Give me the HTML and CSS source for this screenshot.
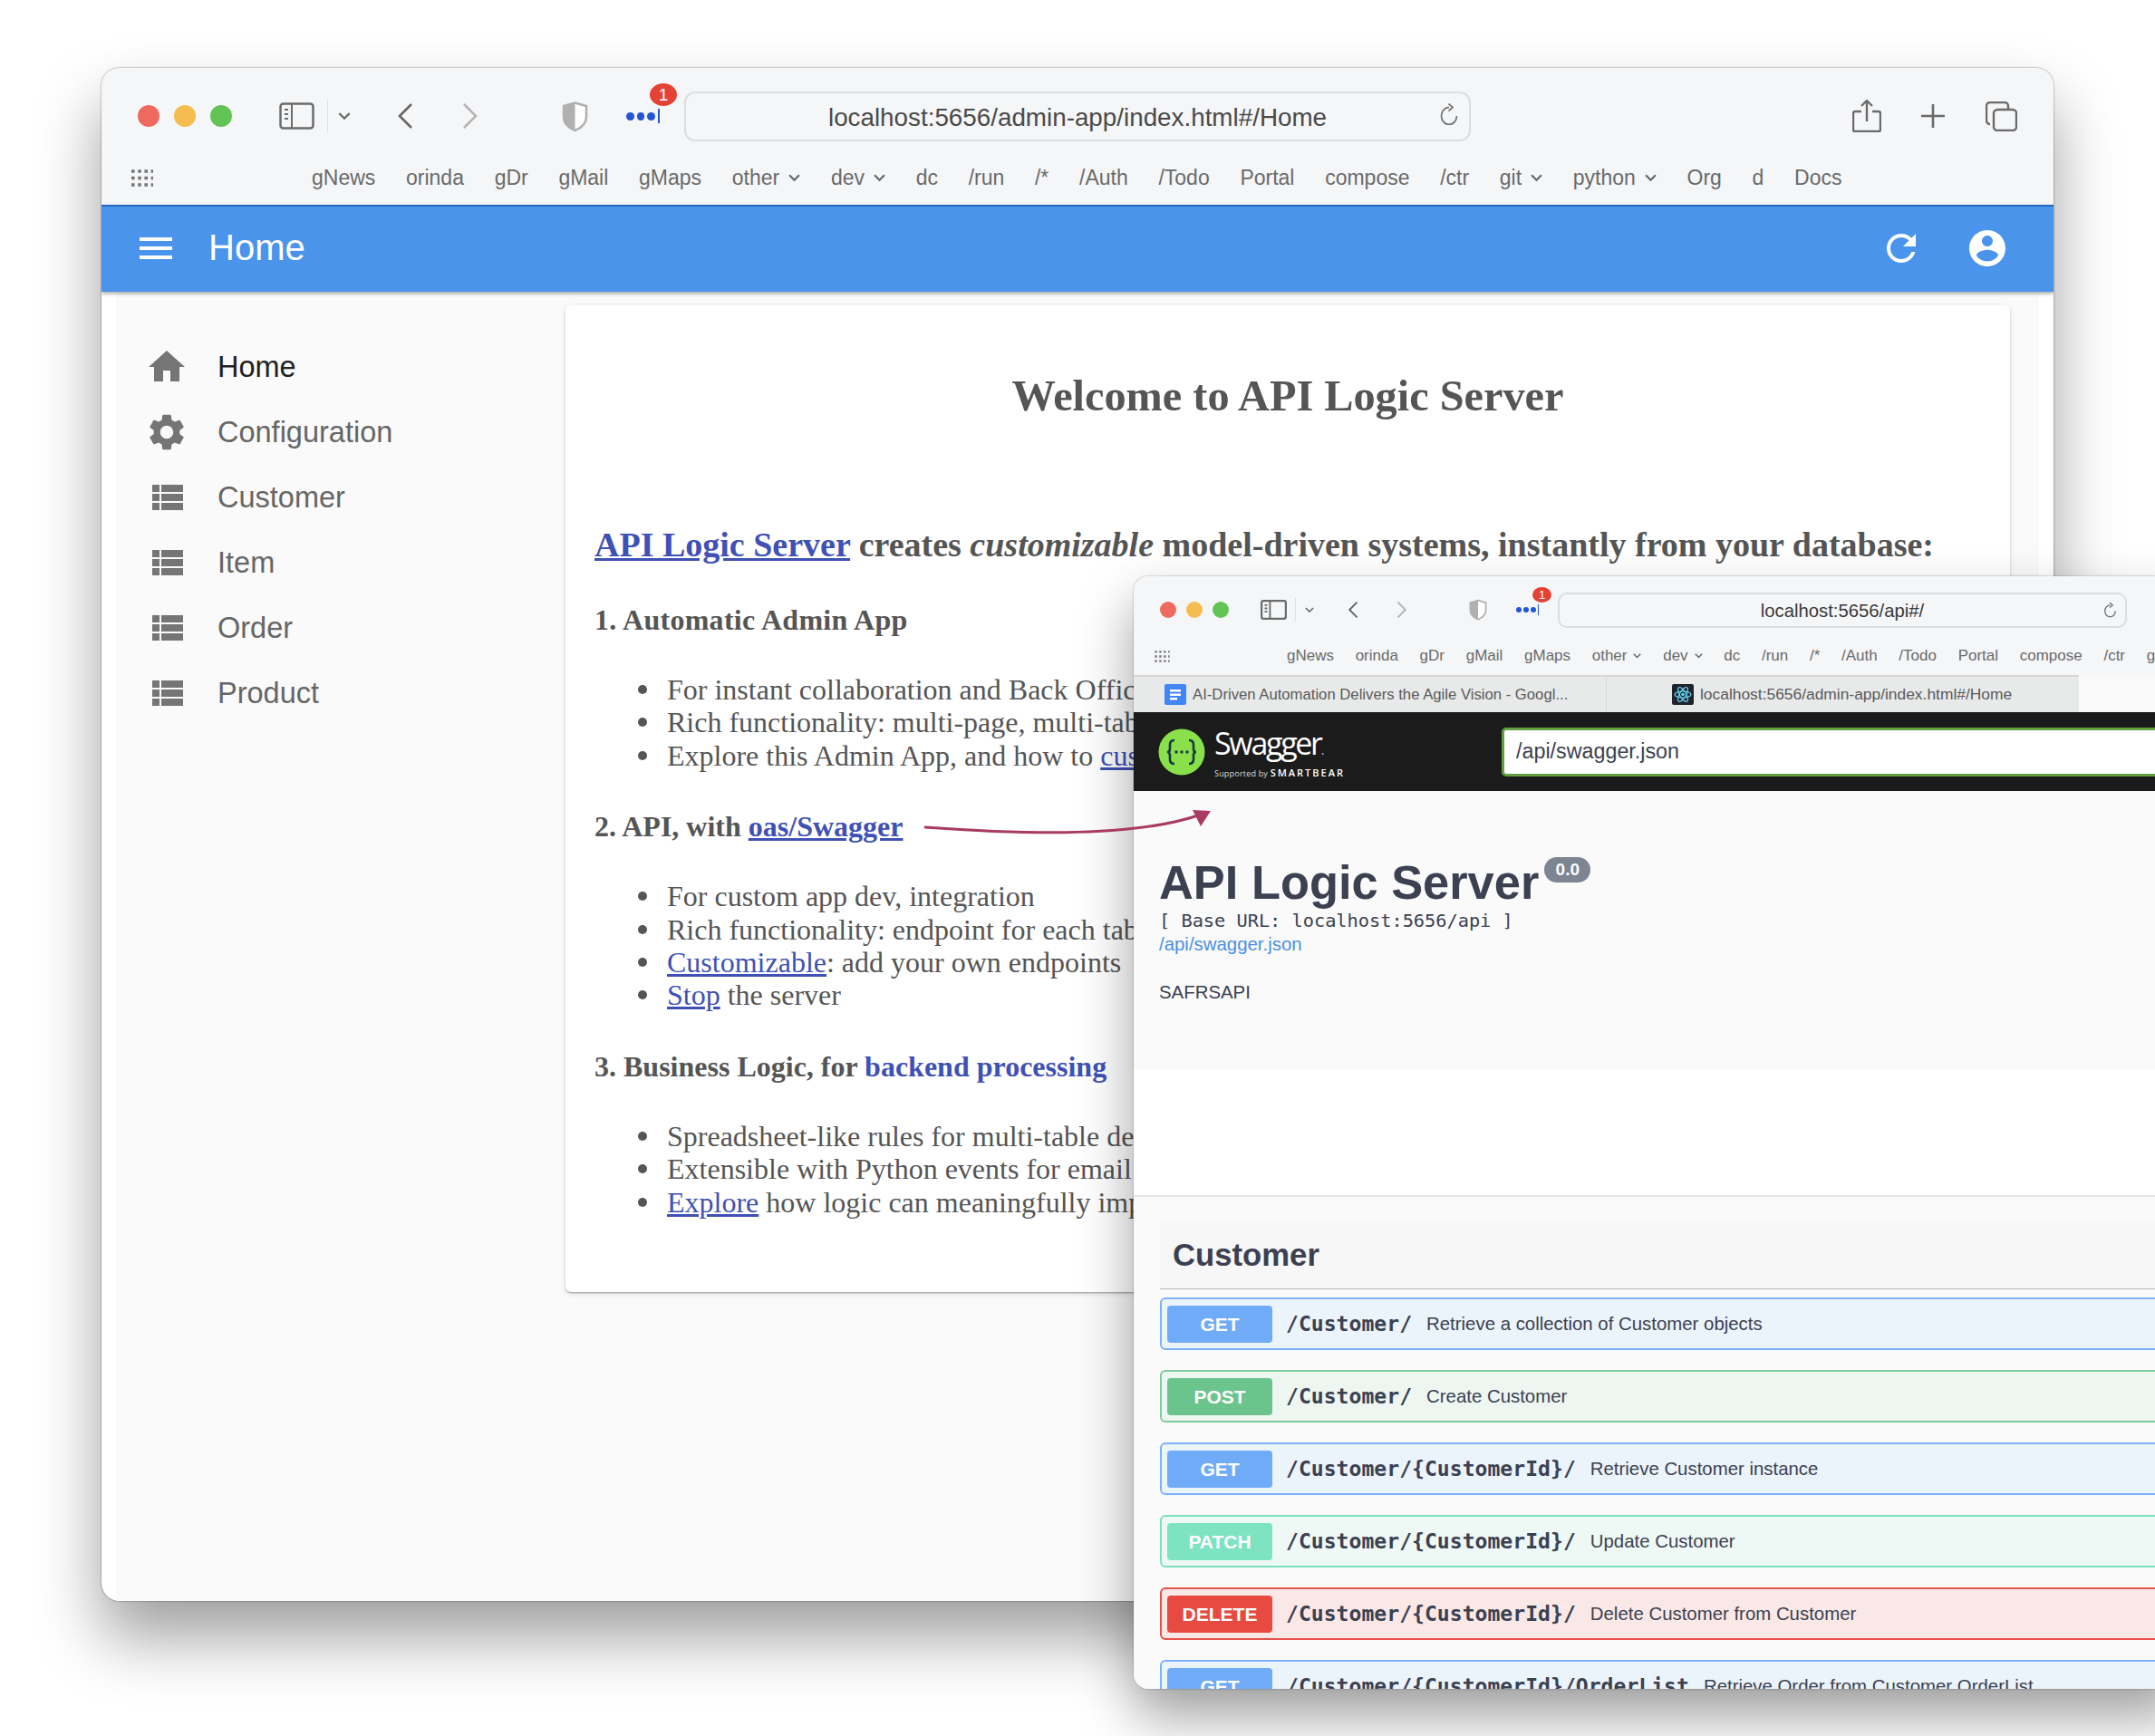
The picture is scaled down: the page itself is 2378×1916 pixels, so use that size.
FILE: index.html

```html
<!DOCTYPE html>
<html lang="en">
<head>
  <meta charset="UTF-8">
  <title>API Logic Server</title>
  <link rel="stylesheet" href="styles.css">
</head>
<body>

<div class="window admin-window">
  <div class="toolbar">
    <div class="top-row">
      <span class="light red"></span><span class="light yellow"></span><span class="light green"></span>
      <svg class="ic-sidebar" viewBox="0 0 39 30"><rect x="1.5" y="1.5" width="36" height="27" rx="3" fill="none" stroke="#6b6b6b" stroke-width="2.5"/><path d="M14 2v26M6 8h4M6 13h4M6 18h4" stroke="#6b6b6b" stroke-width="2"/></svg>
      <span class="tool-divider"></span>
      <svg class="ic-chev" viewBox="0 0 12 8"><path d="M1 1l5 5 5-5" fill="none" stroke="#6b6b6b" stroke-width="2"/></svg>
      <svg class="ic-back" viewBox="0 0 18 28"><path d="M16 1L3 14l13 13" fill="none" stroke="#666" stroke-width="2.6"/></svg>
      <svg class="ic-forward" viewBox="0 0 18 28"><path d="M2 1l13 13L2 27" fill="none" stroke="#b5b5b5" stroke-width="2.6"/></svg>
      <svg class="ic-shield" viewBox="0 0 29 33"><path d="M14.5 1.5L27 5v12c0 7-5 12-12.500 15C7 29 2 24 2 17V5z" fill="#fff" stroke="#b0b0b0" stroke-width="2.500"/><path d="M14.500 1.500L2 5v12c0 7 5 12 12.500 15z" fill="#b0b0b0"/></svg>
      <div class="dots">
        <i></i><i></i><i></i><b></b>
        <span class="dots-badge">1</span>
      </div>
      <div class="urlbar">
        <span>localhost:5656/admin-app/index.html#/Home</span>
        <svg class="ic-reload" viewBox="0 0 22 24"><path d="M11 4.500a8.500 9.500 0 1 0 8.500 9.500" fill="none" stroke="#777" stroke-width="1.800"/><path d="M10.500 0.500l4.500 4-4.500 4" fill="none" stroke="#777" stroke-width="1.800"/></svg>
      </div>
      <svg class="ic-share" viewBox="0 0 32 36"><path d="M10 13H3a2 2 0 0 0-2 2v18a2 2 0 0 0 2 2h26a2 2 0 0 0 2-2V15a2 2 0 0 0-2-2h-7M16 24V2M10 7l6-6 6 6" fill="none" stroke="#6b6b6b" stroke-width="2.400"/></svg>
      <svg class="ic-plus" viewBox="0 0 28 28"><path d="M14 1v26M1 14h26" stroke="#6b6b6b" stroke-width="2.600"/></svg>
      <svg class="ic-tabs" viewBox="0 0 35 33"><rect x="9" y="9" width="25" height="23" rx="4" fill="none" stroke="#6b6b6b" stroke-width="2.400"/><path d="M5 25a4 4 0 0 1-4-4V5a4 4 0 0 1 4-4h16a4 4 0 0 1 4 4v4" fill="none" stroke="#6b6b6b" stroke-width="2.400"/></svg>
    </div>
    <div class="bookmarks">
      <svg class="ic-grid" viewBox="0 0 26 19"><path d="M1 2h24M1 9.500h24M1 17h24" stroke="#777" stroke-width="3.600" stroke-dasharray="3.600 3.600"/></svg>
      <span>gNews</span><span>orinda</span><span>gDr</span><span>gMail</span><span>gMaps</span>
      <span>other<svg class="bm-chev" viewBox="0 0 12 8"><path d="M1 1l5 5 5-5" fill="none" stroke="#666" stroke-width="2"/></svg></span>
      <span>dev<svg class="bm-chev" viewBox="0 0 12 8"><path d="M1 1l5 5 5-5" fill="none" stroke="#666" stroke-width="2"/></svg></span>
      <span>dc</span><span>/run</span><span>/*</span><span>/Auth</span><span>/Todo</span><span>Portal</span><span>compose</span><span>/ctr</span>
      <span>git<svg class="bm-chev" viewBox="0 0 12 8"><path d="M1 1l5 5 5-5" fill="none" stroke="#666" stroke-width="2"/></svg></span>
      <span>python<svg class="bm-chev" viewBox="0 0 12 8"><path d="M1 1l5 5 5-5" fill="none" stroke="#666" stroke-width="2"/></svg></span>
      <span>Org</span><span>d</span><span>Docs</span>
    </div>
  </div>

  <div class="appbar">
    <svg class="appbar-icon" viewBox="0 0 24 24"><path d="M3 18h18v-2H3v2zm0-5h18v-2H3v2zm0-7v2h18V6H3z"/></svg>
    <div class="appbar-title">Home</div>
    <svg class="appbar-icon" viewBox="0 0 24 24"><path d="M17.650 6.350C16.200 4.900 14.210 4 12 4c-4.420 0-7.990 3.580-7.990 8s3.570 8 7.990 8c3.730 0 6.840-2.550 7.730-6h-2.080c-.82 2.330-3.040 4-5.650 4-3.310 0-6-2.690-6-6s2.690-6 6-6c1.660 0 3.140.69 4.220 1.780L13 11h7V4l-2.350 2.350z"/></svg>
    <svg class="appbar-icon" viewBox="0 0 24 24"><path d="M12 2C6.480 2 2 6.480 2 12s4.480 10 10 10 10-4.480 10-10S17.520 2 12 2zm0 3c1.660 0 3 1.340 3 3s-1.340 3-3 3-3-1.340-3-3 1.340-3 3-3zm0 14.200c-2.500 0-4.710-1.280-6-3.220.03-1.990 4-3.080 6-3.080 1.990 0 5.970 1.090 6 3.080-1.290 1.940-3.500 3.220-6 3.220z"/></svg>
  </div>

  <div class="app-body">
    <div class="sidebar">
      <div class="menu-item active">
        <svg viewBox="0 0 24 24"><path d="M10 20v-6h4v6h5v-8h3L12 3 2 12h3v8z"/></svg>Home
      </div>
      <div class="menu-item">
        <svg viewBox="0 0 24 24"><path d="M19.140 12.940c.04-.3.06-.61.06-.94 0-.32-.02-.64-.07-.94l2.030-1.580c.18-.14.23-.41.12-.61l-1.920-3.320c-.12-.22-.37-.29-.59-.22l-2.390.96c-.5-.38-1.030-.7-1.620-.94l-.36-2.540c-.04-.24-.24-.41-.48-.41h-3.840c-.24 0-.43.17-.47.41l-.36 2.540c-.59.24-1.130.57-1.620.94l-2.390-.96c-.22-.08-.47 0-.59.22L2.740 8.870c-.12.21-.08.47.12.61l2.030 1.580c-.05.3-.09.63-.09.94s.02.64.07.94l-2.030 1.580c-.18.14-.23.41-.12.61l1.920 3.320c.12.22.37.29.59.22l2.390-.96c.5.38 1.030.7 1.620.94l.36 2.540c.05.24.24.41.48.41h3.840c.24 0 .44-.17.47-.41l.36-2.540c.59-.24 1.130-.56 1.620-.94l2.390.96c.22.08.47 0 .59-.22l1.920-3.320c.12-.22.07-.47-.12-.61l-2.010-1.580zM12 15.600c-1.980 0-3.600-1.620-3.600-3.600s1.620-3.600 3.600-3.600 3.600 1.620 3.600 3.600-1.620 3.600-3.600 3.600z"/></svg>Configuration
      </div>
      <div class="menu-item">
        <svg viewBox="0 0 24 24"><path d="M4 14h4v-4H4v4zm0 5h4v-4H4v4zM4 9h4V5H4v4zm5 5h12v-4H9v4zm0 5h12v-4H9v4zM9 5v4h12V5H9z"/></svg>Customer
      </div>
      <div class="menu-item">
        <svg viewBox="0 0 24 24"><path d="M4 14h4v-4H4v4zm0 5h4v-4H4v4zM4 9h4V5H4v4zm5 5h12v-4H9v4zm0 5h12v-4H9v4zM9 5v4h12V5H9z"/></svg>Item
      </div>
      <div class="menu-item">
        <svg viewBox="0 0 24 24"><path d="M4 14h4v-4H4v4zm0 5h4v-4H4v4zM4 9h4V5H4v4zm5 5h12v-4H9v4zm0 5h12v-4H9v4zM9 5v4h12V5H9z"/></svg>Order
      </div>
      <div class="menu-item">
        <svg viewBox="0 0 24 24"><path d="M4 14h4v-4H4v4zm0 5h4v-4H4v4zM4 9h4V5H4v4zm5 5h12v-4H9v4zm0 5h12v-4H9v4zM9 5v4h12V5H9z"/></svg>Product
      </div>
    </div>

    <div class="card">
      <h2 class="welcome">Welcome to API Logic Server</h2>
      <p class="lead"><a href="#">API Logic Server</a> creates <i>customizable</i> model-driven systems, instantly from your database:</p>

      <h3 class="first">1. Automatic Admin App</h3>
      <ul>
        <li>For instant collaboration and Back Office</li>
        <li>Rich functionality: multi-page, multi-table</li>
        <li>Explore this Admin App, and how to <a href="#">customize</a></li>
      </ul>

      <h3>2. API, with <a href="#">oas/Swagger</a></h3>
      <ul>
        <li>For custom app dev, integration</li>
        <li>Rich functionality: endpoint for each table</li>
        <li><a href="#">Customizable</a>: add your own endpoints</li>
        <li><a href="#">Stop</a> the server</li>
      </ul>

      <h3>3. Business Logic, for <a class="plain" href="#">backend processing</a></h3>
      <ul>
        <li>Spreadsheet-like rules for multi-table derivations</li>
        <li>Extensible with Python events for email</li>
        <li><a href="#">Explore</a> how logic can meaningfully improve</li>
      </ul>
    </div>
  </div>
</div>

<div class="window swagger-window">
  <div class="toolbar2">
    <div class="top-row2">
      <span class="light2 red"></span><span class="light2 yellow"></span><span class="light2 green"></span>
      <svg class="ic2-sidebar" viewBox="0 0 39 30" preserveAspectRatio="none"><rect x="1.500" y="1.500" width="36" height="27" rx="3" fill="none" stroke="#6b6b6b" stroke-width="3"/><path d="M14 2v26M6 8h4M6 13h4M6 18h4" stroke="#6b6b6b" stroke-width="2.500"/></svg>
      <span class="tool2-divider"></span>
      <svg class="ic2-chev" viewBox="0 0 12 8"><path d="M1 1l5 5 5-5" fill="none" stroke="#6b6b6b" stroke-width="2"/></svg>
      <svg class="ic2-back" viewBox="0 0 18 28"><path d="M16 1L3 14l13 13" fill="none" stroke="#666" stroke-width="3"/></svg>
      <svg class="ic2-forward" viewBox="0 0 18 28"><path d="M2 1l13 13L2 27" fill="none" stroke="#b5b5b5" stroke-width="3"/></svg>
      <svg class="ic2-shield" viewBox="0 0 29 33"><path d="M14.500 1.500L27 5v12c0 7-5 12-12.500 15C7 29 2 24 2 17V5z" fill="#fff" stroke="#b0b0b0" stroke-width="2.500"/><path d="M14.500 1.500L2 5v12c0 7 5 12 12.500 15z" fill="#b0b0b0"/></svg>
      <div class="dots2">
        <i></i><i></i><i></i><b></b>
        <span class="dots2-badge">1</span>
      </div>
      <div class="urlbar2">
        <span>localhost:5656/api#/</span>
        <svg class="ic2-reload" viewBox="0 0 22 24"><path d="M11 4.500a8.500 9.500 0 1 0 8.500 9.500" fill="none" stroke="#777" stroke-width="2"/><path d="M10.500 0.500l4.500 4-4.500 4" fill="none" stroke="#777" stroke-width="2"/></svg>
      </div>
    </div>
    <div class="bookmarks2">
      <svg class="ic2-grid" viewBox="0 0 26 19"><path d="M1 2h24M1 9.500h24M1 17h24" stroke="#777" stroke-width="3.600" stroke-dasharray="3.600 3.600"/></svg>
      <span>gNews</span><span>orinda</span><span>gDr</span><span>gMail</span><span>gMaps</span>
      <span>other<svg class="bm2-chev" viewBox="0 0 12 8"><path d="M1 1l5 5 5-5" fill="none" stroke="#666" stroke-width="2"/></svg></span>
      <span>dev<svg class="bm2-chev" viewBox="0 0 12 8"><path d="M1 1l5 5 5-5" fill="none" stroke="#666" stroke-width="2"/></svg></span>
      <span>dc</span><span>/run</span><span>/*</span><span>/Auth</span><span>/Todo</span><span>Portal</span><span>compose</span><span>/ctr</span><span>git</span>
    </div>
  </div>

  <div class="tabs">
    <div class="tab">
      <svg class="tab-icon" viewBox="0 0 24 23"><rect width="24" height="23" rx="2" fill="#4285f4"/><path d="M6 6h12v2.500H6zM6 10.500h12V13H6zM6 15h8v2.500H6z" fill="#fff"/></svg>
      AI-Driven Automation Delivers the Agile Vision - Googl...
    </div>
    <div class="tab tab-two">
      <svg class="tab-icon" viewBox="0 0 24 23"><rect width="24" height="23" rx="2" fill="#20232a"/><g fill="none" stroke="#61dafb" stroke-width="1.200"><ellipse cx="12" cy="11.500" rx="9" ry="3.500"/><ellipse cx="12" cy="11.500" rx="9" ry="3.500" transform="rotate(60 12 11.500)"/><ellipse cx="12" cy="11.500" rx="9" ry="3.500" transform="rotate(120 12 11.500)"/></g><circle cx="12" cy="11.500" r="1.800" fill="#61dafb"/></svg>
      localhost:5656/admin-app/index.html#/Home
    </div>
  </div>

  <div class="swagger-bar">
    <svg class="swagger-logo" viewBox="0 0 52 52">
      <circle cx="26" cy="26" r="25.500" fill="#89e04b"/>
      <path d="M18 13c-4 0-5 2-5 5v4.500c0 2-1 3.500-3 3.500 2 0 3 1.500 3 3.500V34c0 3 1 5 5 5M34 13c4 0 5 2 5 5v4.500c0 2 1 3.500 3 3.500-2 0-3 1.500-3 3.500V34c0 3-1 5-5 5" fill="none" stroke="#173647" stroke-width="2.600"/>
      <circle cx="20" cy="26" r="1.700" fill="#173647"/><circle cx="26" cy="26" r="1.700" fill="#173647"/><circle cx="32" cy="26" r="1.700" fill="#173647"/>
    </svg>
    <div class="swagger-brand">
      <div class="brand-name">Swagger<small>.</small></div>
      <div class="brand-sub">Supported by <b>SMARTBEAR</b></div>
    </div>
    <div class="swagger-input">/api/swagger.json</div>
  </div>

  <div class="info">
    <div class="info-title">API Logic Server<span class="version">0.0</span></div>
    <div class="base-url">[ Base URL: localhost:5656/api ]</div>
    <a class="spec-link" href="#">/api/swagger.json</a>
    <div class="info-desc">SAFRSAPI</div>
  </div>
  <div class="info-gap"></div>

  <div class="tag-section">
    <div class="tag-header">Customer</div>

    <div class="op op-get">
      <span class="method">GET</span><span class="op-path">/Customer/</span><span class="op-desc">Retrieve a collection of Customer objects</span>
    </div>
    <div class="op op-post">
      <span class="method">POST</span><span class="op-path">/Customer/</span><span class="op-desc">Create Customer</span>
    </div>
    <div class="op op-get">
      <span class="method">GET</span><span class="op-path">/Customer/{CustomerId}/</span><span class="op-desc">Retrieve Customer instance</span>
    </div>
    <div class="op op-patch">
      <span class="method">PATCH</span><span class="op-path">/Customer/{CustomerId}/</span><span class="op-desc">Update Customer</span>
    </div>
    <div class="op op-delete">
      <span class="method">DELETE</span><span class="op-path">/Customer/{CustomerId}/</span><span class="op-desc">Delete Customer from Customer</span>
    </div>
    <div class="op op-get">
      <span class="method">GET</span><span class="op-path">/Customer/{CustomerId}/OrderList</span><span class="op-desc">Retrieve Order from Customer OrderList</span>
    </div>
  </div>
</div>

<svg class="arrow" viewBox="0 0 340 40">
  <path d="M5 28C90 34 230 42 310 14" fill="none" stroke="#a83a63" stroke-width="3"/>
  <path d="M321 10L301 9L310 27z" fill="#a83a63"/>
</svg>

</body>
</html>
```

FILE: styles.css

```css
html, body {
  margin: 0;
  height: 100%;
  overflow: hidden;
  background: #fff;
}
body {
  position: relative;
  font-family: "Liberation Sans", Arial, sans-serif;
}
svg {
  display: block;
  flex: none;
}

.window {
  position: absolute;
  overflow: hidden;
  box-sizing: border-box;
}
.admin-window {
  left: 112px;
  top: 75px;
  width: 2154px;
  height: 1692px;
  background: #fff;
  border-radius: 20px;
  box-shadow: 0 40px 70px rgba(0, 0, 0, 0.38), 0 0 2px rgba(0, 0, 0, 0.6);
  display: flex;
  flex-direction: column;
}
.swagger-window {
  left: 1251px;
  top: 636px;
  width: 1160px;
  height: 1228px;
  background: #fafafa;
  border-radius: 16px;
  box-shadow: 0 30px 60px rgba(0, 0, 0, 0.38), 0 0 2px rgba(0, 0, 0, 0.4);
}

/* safari toolbar, big window */
.toolbar {
  height: 151px;
  background: #f5f6f8;
  flex: none;
}
.top-row {
  height: 106px;
  display: flex;
  align-items: center;
  padding-left: 40px;
}
.light {
  width: 24px;
  height: 24px;
  border-radius: 50%;
  margin-right: 16px;
}
.light.red, .light2.red { background: #ee6a5f; }
.light.yellow, .light2.yellow { background: #f5bd4f; }
.light.green, .light2.green { background: #61c454; }
.ic-sidebar { width: 39px; height: 30px; margin-left: 36px; }
.tool-divider {
  width: 1px;
  height: 36px;
  background: #e0e0e0;
  margin-left: 14px;
}
.ic-chev { width: 14px; height: 9px; margin-left: 11px; }
.ic-back { width: 18px; height: 28px; margin-left: 51px; }
.ic-forward { width: 18px; height: 28px; margin-left: 54px; }
.ic-shield { width: 29px; height: 33px; margin-left: 92px; }
.dots {
  position: relative;
  width: 37px;
  margin-left: 42px;
  display: flex;
  align-items: center;
  gap: 3px;
}
.dots i {
  width: 9px;
  height: 9px;
  border-radius: 50%;
  background: #2356d6;
}
.dots b {
  width: 2px;
  height: 16px;
  background: #2356d6;
}
.dots-badge {
  position: absolute;
  left: 26px;
  top: -28px;
  width: 30px;
  height: 25px;
  border-radius: 50%;
  background: #e34234;
  color: #fff;
  font-size: 19px;
  line-height: 25px;
  text-align: center;
}
.urlbar {
  position: relative;
  box-sizing: border-box;
  width: 868px;
  height: 55px;
  margin-left: 27px;
  border: 2px solid #dcdddf;
  border-radius: 12px;
  text-align: center;
  line-height: 53px;
  font-size: 27.800px;
  color: #4a4a4a;
}
.ic-reload {
  position: absolute;
  right: 11px;
  top: 11px;
  width: 22px;
  height: 24px;
}
.ic-share { width: 32px; height: 36px; margin-left: 421px; }
.ic-plus { width: 28px; height: 28px; margin-left: 43px; }
.ic-tabs { width: 35px; height: 33px; margin-left: 44px; }

.bookmarks {
  height: 30px;
  display: flex;
  align-items: center;
  gap: 33.700px;
  padding-left: 32px;
  font-size: 23px;
  color: #6a6a6a;
  white-space: nowrap;
}
.bookmarks span {
  display: flex;
  align-items: center;
}
.ic-grid { width: 26px; height: 19px; margin-right: 174px; }
.ic-grid + span { margin-left: -33.700px; }
.bm-chev { width: 13px; height: 9px; margin-left: 10px; }

/* blue app bar */
.appbar {
  height: 96px;
  box-sizing: border-box;
  flex: none;
  background: #4a94ec;
  border-top: 2px solid #2468c0;
  box-shadow: 0 2px 4px rgba(0, 0, 0, 0.35);
  display: flex;
  align-items: center;
  padding: 0 49px 2px 36px;
  gap: 47px;
  position: relative;
  z-index: 1;
}
.appbar-icon {
  width: 48px;
  height: 48px;
  fill: #fff;
}
.appbar-title {
  color: #fff;
  font-size: 40px;
  margin-left: -13px;
  padding-bottom: 2px;
  flex: 1;
}

.app-body {
  flex: 1;
  display: flex;
  align-items: flex-start;
  margin: 0 16px;
  background: #fafafa;
}
.sidebar {
  width: 496px;
  padding: 47px 0 0 32px;
  box-sizing: border-box;
  flex: none;
}
.menu-item {
  height: 72px;
  display: flex;
  align-items: center;
  font-size: 32.500px;
  color: #666;
}
.menu-item.active { color: #212121; }
.menu-item svg {
  width: 48px;
  height: 48px;
  margin-right: 32px;
  fill: #757575;
}

.card {
  width: 1594px;
  height: 1089px;
  margin-top: 15px;
  box-sizing: border-box;
  padding: 72px 32px 0;
  background: #fff;
  border-radius: 6px;
  box-shadow: 0 2px 2px -1px rgba(0, 0, 0, 0.2), 0 1px 2px rgba(0, 0, 0, 0.14), 0 2px 6px rgba(0, 0, 0, 0.12);
  font-family: "Liberation Serif", "Times New Roman", serif;
  color: #555;
  white-space: nowrap;
}
.card a { color: #3f51b5; }
.card a.plain { text-decoration: none; }
.welcome {
  margin: 0;
  font-size: 48.300px;
  line-height: 56px;
  text-align: center;
}
.lead {
  margin: 114px 0 0;
  font-size: 38px;
  line-height: 44px;
  font-weight: bold;
}
.card h3 {
  margin: 41px 0 0;
  font-size: 32px;
  line-height: 38px;
}
.card h3.first {
  margin-top: 42px;
  letter-spacing: 0.270px;
}
.card ul {
  margin: 40px 0 0;
  padding-left: 80px;
  font-size: 32px;
  line-height: 36.400px;
  list-style: none;
}
.card li { position: relative; }
.card li::before {
  content: "";
  position: absolute;
  left: -32px;
  top: 13px;
  width: 10px;
  height: 10px;
  border-radius: 50%;
  background: #555;
}

/* small window */
.toolbar2 {
  height: 109px;
  background: #f5f6f8;
}
.top-row2 {
  height: 74px;
  display: flex;
  align-items: center;
  padding-left: 29px;
}
.light2 {
  width: 18px;
  height: 18px;
  border-radius: 50%;
  margin-right: 11px;
}
.ic2-sidebar { width: 29px; height: 22px; margin-left: 24px; }
.tool2-divider {
  width: 1px;
  height: 26px;
  background: #e0e0e0;
  margin-left: 9px;
}
.ic2-chev { width: 10px; height: 7px; margin-left: 10px; }
.ic2-back { width: 12px; height: 18px; margin-left: 37px; }
.ic2-forward { width: 12px; height: 18px; margin-left: 42px; }
.ic2-shield { width: 20px; height: 24px; margin-left: 68px; }
.dots2 {
  position: relative;
  width: 24px;
  margin-left: 32px;
  display: flex;
  align-items: center;
  gap: 2px;
}
.dots2 i {
  width: 6px;
  height: 6px;
  border-radius: 50%;
  background: #2356d6;
  flex: none;
}
.dots2 b {
  width: 1px;
  height: 12px;
  background: #2356d6;
  flex: none;
}
.dots2-badge {
  position: absolute;
  left: 18px;
  top: -19px;
  width: 21px;
  height: 17px;
  border-radius: 50%;
  background: #e34234;
  color: #fff;
  font-size: 13px;
  line-height: 17px;
  text-align: center;
}
.urlbar2 {
  position: relative;
  box-sizing: border-box;
  width: 628px;
  height: 39px;
  margin-left: 22px;
  border: 2px solid #dcdddf;
  border-radius: 10px;
  text-align: center;
  line-height: 36px;
  font-size: 20.300px;
  color: #3a3a3a;
}
.ic2-reload {
  position: absolute;
  right: 9px;
  top: 8px;
  width: 15px;
  height: 18px;
}
.bookmarks2 {
  height: 28px;
  display: flex;
  align-items: center;
  gap: 23.700px;
  padding-left: 22px;
  font-size: 17px;
  color: #6a6a6a;
  white-space: nowrap;
}
.bookmarks2 span {
  display: flex;
  align-items: center;
}
.ic2-grid { width: 19px; height: 13px; margin-right: 128px; }
.ic2-grid + span { margin-left: -23.700px; }
.bm2-chev { width: 9px; height: 6px; margin-left: 7px; }

.tabs {
  height: 41px;
  box-sizing: border-box;
  display: flex;
  width: 1043px;
  background: #e8e9e9;
  border-top: 2px solid #d6d6d6;
  font-size: 16.700px;
  color: #5a5a5a;
}
.tab {
  width: 521px;
  box-sizing: border-box;
  display: flex;
  align-items: center;
  gap: 7px;
  padding-left: 34px;
  white-space: nowrap;
}
.tab-two {
  width: 522px;
  padding-left: 72px;
  border-left: 1px solid #d6d6d6;
  font-size: 17.400px;
}
.tab-icon { width: 24px; height: 23px; }

.swagger-bar {
  height: 87px;
  background: #1b1b1b;
  display: flex;
  align-items: center;
  padding-left: 27px;
}
.swagger-logo { width: 52px; height: 52px; }
.swagger-brand {
  width: 328px;
  padding: 1px 0 0 10px;
  box-sizing: border-box;
  color: #fff;
}
.brand-name {
  font-family: "Open Sans", sans-serif;
  font-size: 34px;
  line-height: 38px;
  letter-spacing: -2.300px;
}
.brand-name small { color: #ccc; font-size: 14px; }
.brand-sub {
  font-family: "Open Sans", sans-serif;
  font-size: 9px;
  line-height: 12px;
  color: #ddd;
  letter-spacing: 0.200px;
}
.brand-sub b {
  font-size: 11px;
  font-weight: 600;
  letter-spacing: 2px;
  color: #fff;
}
.swagger-input {
  flex: 1;
  height: 54px;
  box-sizing: border-box;
  background: #fff;
  border: 3px solid #62a03f;
  border-radius: 5px 0 0 5px;
  padding-left: 13px;
  line-height: 46px;
  font-size: 23.300px;
  color: #3b4151;
  margin-left: -1px;
}

.info {
  height: 307px;
  box-sizing: border-box;
  padding: 71px 0 0 28px;
  background: #fafafa;
  color: #3b4151;
}
.info-title {
  display: flex;
  align-items: flex-start;
  font-size: 52.400px;
  line-height: 60px;
  font-weight: bold;
}
.version {
  margin: 2px 0 0 6px;
  width: 51px;
  height: 28px;
  border-radius: 14px;
  background: #7d8492;
  color: #fff;
  font-size: 19px;
  line-height: 28px;
  text-align: center;
}
.base-url {
  font-family: "DejaVu Sans Mono", monospace;
  font-size: 20.300px;
  line-height: 25px;
}
.spec-link {
  display: block;
  font-size: 20.400px;
  line-height: 26px;
  color: #4990e2;
  text-decoration: none;
}
.info-desc {
  margin-top: 27px;
  font-size: 20.400px;
  line-height: 27px;
}
.info-gap {
  height: 139px;
  background: #fff;
  border-bottom: 2px solid #e6e6e6;
}

.tag-section {
  padding: 27px 0 0 29px;
  background: #fafafa;
  color: #3b4151;
}
.tag-header {
  height: 75px;
  box-sizing: border-box;
  padding-left: 14px;
  background: #f7f7f7;
  border-bottom: 1px solid #bbb;
  font-size: 34.700px;
  font-weight: bold;
  line-height: 75px;
  margin-bottom: 9px;
}
.op {
  height: 58px;
  box-sizing: border-box;
  margin-bottom: 22px;
  border: 2px solid;
  border-radius: 6px;
  display: flex;
  align-items: center;
  padding-left: 6px;
  white-space: nowrap;
}
.method {
  width: 116px;
  height: 41px;
  border-radius: 4px;
  color: #fff;
  font-size: 21px;
  font-weight: bold;
  line-height: 41px;
  text-align: center;
  flex: none;
}
.op-path {
  margin-left: 15px;
  font-family: "DejaVu Sans Mono", monospace;
  font-size: 23.100px;
  font-weight: bold;
}
.op-desc {
  margin-left: 16px;
  font-size: 20.400px;
}
.op-get { background: #ebf3fb; border-color: #7db2f7; }
.op-get .method { background: #70abf8; }
.op-post { background: #edf6f0; border-color: #7fcba0; }
.op-post .method { background: #6cc48d; }
.op-patch { background: #eef8f5; border-color: #7fe0bf; }
.op-patch .method { background: #7de3c0; }
.op-delete { background: #fae8e7; border-color: #e6524a; }
.op-delete .method { background: #e64a40; }

.arrow {
  position: absolute;
  left: 1015px;
  top: 885px;
  width: 340px;
  height: 40px;
}
```
